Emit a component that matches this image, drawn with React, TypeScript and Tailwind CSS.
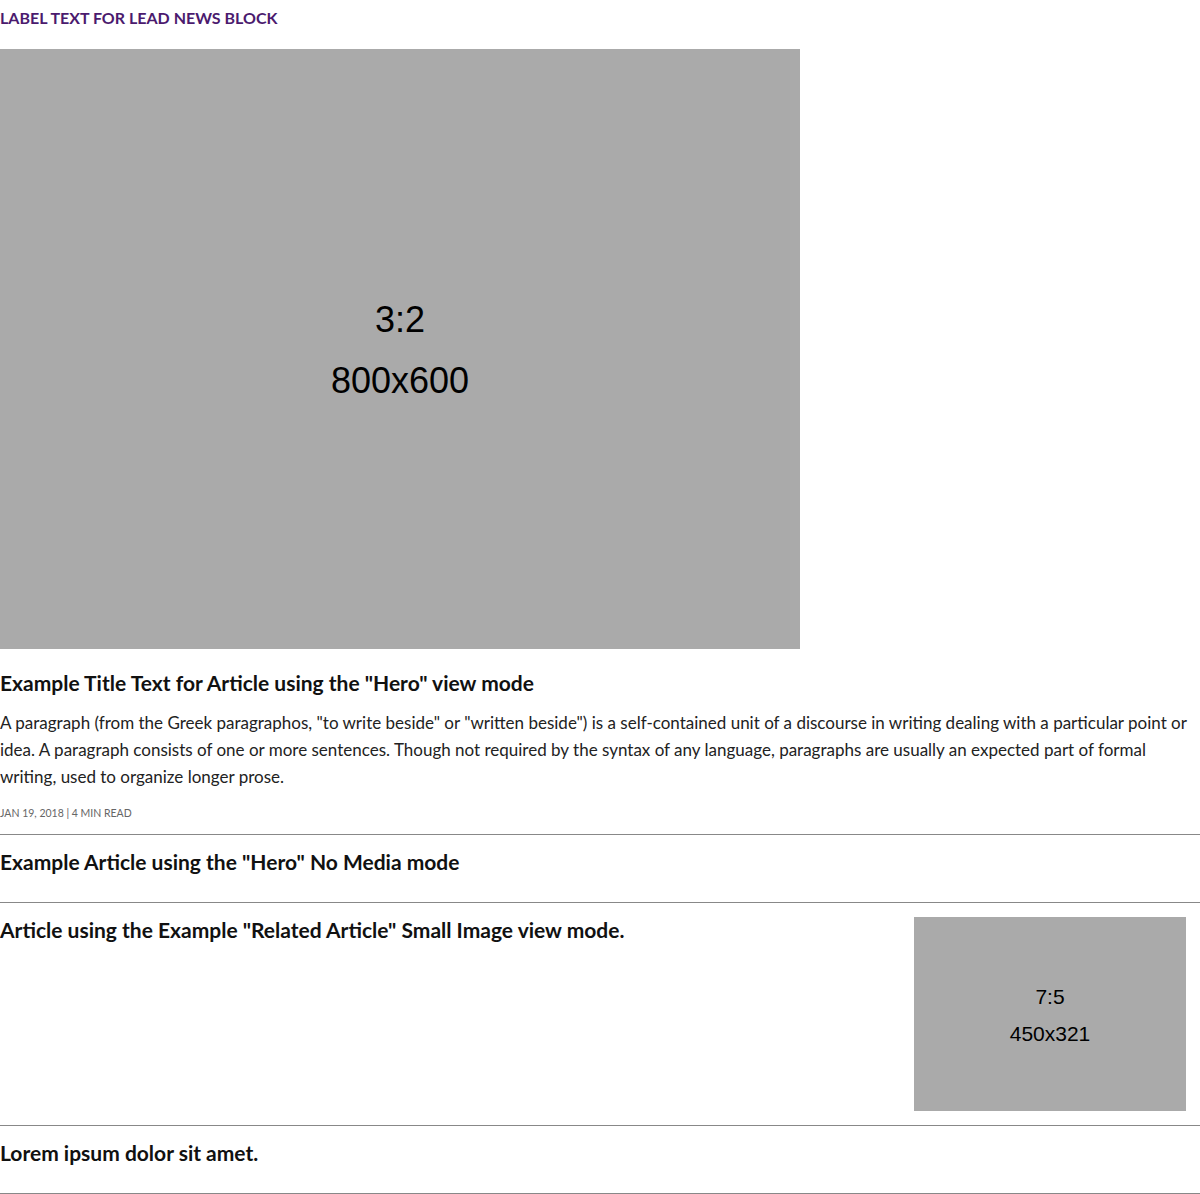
const textFont = "font-['Lato','Noto_Sans',sans-serif]";
const placeholderFont = "font-['Liberation_Sans',Arial,sans-serif]";

function Placeholder({ ratio, size, className, textClassName }: { ratio: string; size: string; className: string; textClassName: string }) {
  return (
    <div className={`flex flex-col items-center justify-center bg-[#aaaaaa] text-black ${placeholderFont} ${className}`}>
      <div className={textClassName}>{ratio}</div>
      <div className={textClassName}>{size}</div>
    </div>
  );
}

function ArticleRow({ title }: { title: string }) {
  return (
    <div className="border-b border-[#888888] pt-[14px] pb-[27px]">
      <h3 className="text-[21px] font-bold leading-[26px] text-[#111111]">{title}</h3>
    </div>
  );
}

export default function App() {
  return (
    <div className={`w-[1200px] bg-white ${textFont}`}>
      <div className="pt-[8px] pb-[21px] text-[16px] font-bold uppercase leading-[20px] text-[#4b1a6e]">
        Label text for lead news block
      </div>

      <Placeholder
        ratio="3:2"
        size="800x600"
        className="h-[600px] w-[800px] gap-[24px] pt-[2px]"
        textClassName="text-[36px] leading-[37px]"
      />

      <div className="border-b border-[#888888] pb-[14px]">
        <h2 className="mt-[21px] text-[21px] font-bold leading-[26px] text-[#111111]">
          Example Title Text for Article using the "Hero" view mode
        </h2>
        <p className="mt-[13px] text-[17px] leading-[27px] text-[#222222]">
          A paragraph (from the Greek paragraphos, "to write beside" or "written beside") is a self-contained unit of a
          discourse in writing dealing with a particular point or idea. A paragraph consists of one or more sentences.
          Though not required by the syntax of any language, paragraphs are usually an expected part of formal writing,
          used to organize longer prose.
        </p>
        <div className="mt-[16px] text-[10.5px] uppercase leading-[14px] text-[#666666]">Jan 19, 2018 | 4 min read</div>
      </div>

      <ArticleRow title={'Example Article using the "Hero" No Media mode'} />

      <div className="flex items-start justify-between border-b border-[#888888] py-[14px] pr-[14px]">
        <h3 className="text-[21px] font-bold leading-[26px] text-[#111111]">
          Article using the Example "Related Article" Small Image view mode.
        </h3>
        <Placeholder
          ratio="7:5"
          size="450x321"
          className="h-[194px] w-[272px] shrink-0 gap-[13px] pt-[2px]"
          textClassName="text-[21px] leading-[24px]"
        />
      </div>

      <ArticleRow title="Lorem ipsum dolor sit amet." />
    </div>
  );
}
